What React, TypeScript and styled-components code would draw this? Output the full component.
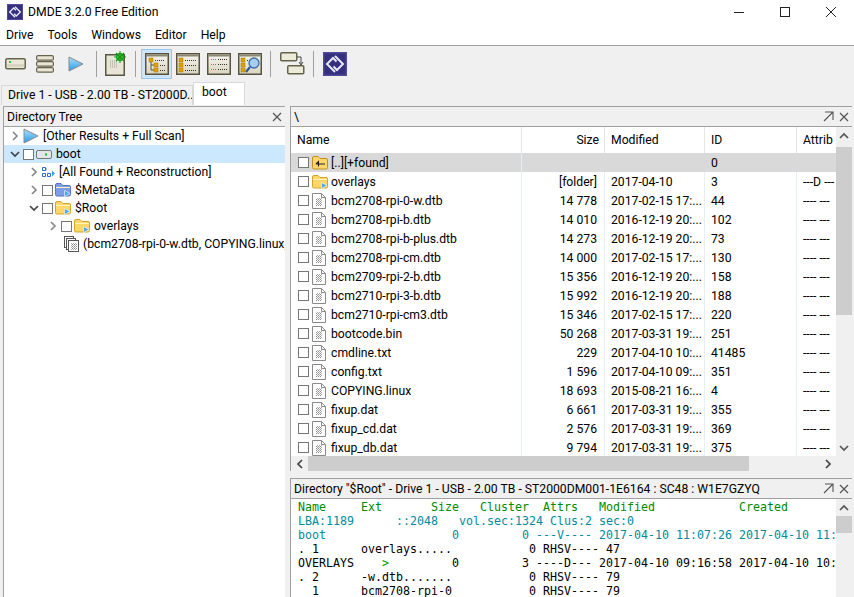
import React from "react";
import styled, { createGlobalStyle } from "styled-components";

const Global = createGlobalStyle`
  html, body { margin: 0; padding: 0; background: #f0f0f0; overflow: hidden; }
  #root { width: 854px; height: 597px; overflow: hidden; }
  * { box-sizing: border-box; }
`;

const Page = styled.div`
  width: 854px; height: 597px; display: flex; flex-direction: column;
  font-family: Roboto, "Liberation Sans", sans-serif; font-size: 12px; color: #000; background: #f0f0f0;
  overflow: hidden;
`;
const TitleBar = styled.div`
  height: 23px; flex: none; background: #fff; display: flex; align-items: center; padding-left: 7px;
`;
const TitleText = styled.div`margin-left: 5px; font-size: 12.2px; flex: 1; padding-top: 0;`;
const WinBtn = styled.div`
  width: 46px; height: 23px; display: flex; align-items: center; justify-content: center;
`;
const MenuBar = styled.div`
  height: 23px; flex: none; background: #fff; display: flex; align-items: center; padding: 2px 0 0 6px; gap: 14px;
  border-bottom: 1px solid #a0a0a0;
`;
const Menu = styled.span`font-size: 12.2px;`;
const Toolbar = styled.div`
  height: 35px; flex: none; display: flex; align-items: center; padding-left: 1px;
`;
const ToolBtn = styled.div<{ $w: number; $on?: boolean }>`
  width: ${p => p.$w}px; height: 30px; flex: none; display: flex; align-items: center; justify-content: center;
  background: ${p => (p.$on ? "#cce4f7" : "transparent")};
  border: 1px solid ${p => (p.$on ? "#99c9ef" : "transparent")};
`;
const Sep = styled.div`width: 1px; height: 26px; background: #a0a0a0; flex: none; margin: 0 5px;`;
const TabsRow = styled.div`
  height: 24px; flex: none; display: flex; align-items: flex-end; padding-left: 1px;
`;
const Tab = styled.div<{ $on?: boolean }>`
  height: ${p => (p.$on ? 23 : 20)}px; width: ${p => (p.$on ? 52 : 192)}px;
  background: ${p => (p.$on ? "#fff" : "#f0f0f0")};
  border: 1px solid #d9d9d9; border-bottom: none;
  padding: ${p => (p.$on ? "2px 0 0 8px" : "2px 0 0 6px")};
  white-space: nowrap; overflow: hidden; font-size: 12.2px;
`;
const Workspace = styled.div`
  flex: 1; min-height: 0; display: flex; padding: 1px 2px 0 3px; gap: 5px;
`;
const Panel = styled.div<{ $w?: number }>`
  ${p => (p.$w ? `width: ${p.$w}px; flex: none;` : "flex: 1; min-width: 0;")}
  border-top: 1px solid #a0a0a0; border-left: 1px solid #a0a0a0;
  display: flex; flex-direction: column; background: #fff; overflow: hidden; min-height: 0;
`;
const RightCol = styled.div`flex: 1; min-width: 0; display: flex; flex-direction: column; gap: 7px;`;
const PanelHead = styled.div`
  height: 20px; flex: none; background: #f0f0f0; border-bottom: 1px solid #a0a0a0;
  display: flex; align-items: center; padding: 0 3px 0 3px; font-size: 12.2px; white-space: nowrap;
`;
const PanelTitle = styled.div`flex: 1; min-width: 0; overflow: hidden;`;
const HeadIcons = styled.div`display: flex; gap: 5px; align-items: center; flex: none;`;
const Tree = styled.div`padding-top: 0; flex: 1; overflow: hidden;`;
const TreeRow = styled.div<{ $on?: boolean; $indent: number }>`
  height: 18px; display: flex; align-items: center; padding-left: ${p => p.$indent}px;
  background: ${p => (p.$on ? "#cce8ff" : "transparent")}; white-space: nowrap; overflow: hidden;
`;
const Check = styled.div`
  width: 11px; height: 11px; border: 1px solid #767676; background: #fff; flex: none; margin-right: 2px;
`;
const TreeLabel = styled.span`margin-left: 4px; font-size: 12.2px;`;
const TableWrap = styled.div`flex: 1; min-height: 0; display: flex; flex-direction: column;`;
const TableMain = styled.div`flex: 1; min-height: 0; display: flex;`;
const Table = styled.div`flex: 1; min-width: 0; overflow: hidden;`;
const gridCols = "231px 83px 100px 92px 1fr";
const HeaderRow = styled.div`
  display: grid; grid-template-columns: ${gridCols}; height: 26px; align-items: stretch; background: #fff;
`;
const HeadCell = styled.div<{ $right?: boolean; $last?: boolean }>`
  display: flex; align-items: center; justify-content: ${p => (p.$right ? "flex-end" : "flex-start")};
  padding: ${p => (p.$right ? "0 5px 0 0" : "0 0 0 6px")}; overflow: hidden; white-space: nowrap;
  border-right: ${p => (p.$last ? "none" : "1px solid #e5e5e5")}; font-size: 12.2px;
`;
const DataRow = styled.div<{ $on?: boolean }>`
  display: grid; grid-template-columns: ${gridCols}; height: 19px; background: ${p => (p.$on ? "#d9d9d9" : "#fff")};
`;
const Cell = styled.div<{ $right?: boolean; $last?: boolean; $on?: boolean }>`
  display: flex; align-items: center; justify-content: ${p => (p.$right ? "flex-end" : "flex-start")};
  padding: ${p => (p.$right ? "0 7px 0 0" : "0 0 0 6px")}; overflow: hidden; white-space: nowrap; font-size: 12.2px;
  border-right: ${p => (p.$last || p.$on ? "none" : "1px solid #e6eef7")};
`;
const NameCell = styled(Cell)`padding-left: 7px;`;
const RowIcon = styled.span`display: inline-flex; width: 18px; flex: none; margin-left: 1px; margin-right: 1px;`;
const VScroll = styled.div`
  width: 16px; flex: none; background: #f0f0f0; display: flex; flex-direction: column; align-items: stretch;
`;
const ScrollArrow = styled.div`height: 17px; flex: none; display: flex; align-items: center; justify-content: center;`;
const VThumb = styled.div<{ $h: number; $t: number }>`
  height: ${p => p.$h}px; margin-top: ${p => p.$t}px; background: #cdcdcd; flex: none;
`;
const Fill = styled.div`flex: 1;`;
const HScroll = styled.div`height: 15px; flex: none; display: flex; background: #f0f0f0; align-items: stretch;`;
const HArrow = styled.div`width: 17px; flex: none; display: flex; align-items: center; justify-content: center;`;
const HThumb = styled.div`width: 441px; background: #cdcdcd; flex: none;`;
const HEnd = styled.div`width: 16px; flex: none; background: #f0f0f0;`;
const ConsoleWrap = styled.div`height: 98px; flex: none; display: flex; overflow: hidden;`;
const Console = styled.div`
  flex: 1; min-width: 0; overflow: hidden; padding: 1px 0 0 7px;
  font-family: "DejaVu Sans Mono", "Liberation Mono", monospace; font-size: 11.63px; line-height: 14px;
`;
const Line = styled.div<{ $c?: string }>`white-space: pre; color: ${p => p.$c || "#000"};`;
const Gt = styled.span`color: #00a000;`;

const Chev = ({ d, c = "#888" }: { d: "r" | "d" | "u" | "l"; c?: string }) => {
  const p = { r: "M3 1l4 4-4 4", l: "M7 1L3 5l4 4", d: "M1 3l4 4 4-4", u: "M1 7l4-4 4 4" }[d];
  return <svg width="10" height="10" viewBox="0 0 10 10" style={{ flex: "none" }}><path d={p} fill="none" stroke={c} strokeWidth="1.7" /></svg>;
};
const Slot = styled.span`width: 17px; display: inline-flex; justify-content: center; flex: none;`;

const Logo = ({ s = 16 }: { s?: number }) => (
  <svg width={s} height={s} viewBox="0 0 24 24">
    <rect width="24" height="24" fill="#2f2a7c" />
    <rect x=".8" y=".8" width="22.4" height="22.4" fill="#34307f" stroke="#5d5aa0" />
    <path d="M12 4l8 8-6 6-3.5-3.5M12 20l-8-8 6-6 3.5 3.5" fill="none" stroke="#e8e8f4" strokeWidth="2" />
  </svg>
);
const Bezel = ({ children, w = 24, h = 22 }: { children?: React.ReactNode; w?: number; h?: number }) => (
  <svg width={w} height={h} viewBox={`0 0 ${w} ${h}`}>
    <defs><linearGradient id="bz" x1="0" y1="0" x2="0" y2="1"><stop offset="0" stopColor="#f7f6ee" /><stop offset="1" stopColor="#d8d4c0" /></linearGradient></defs>
    <rect x=".75" y=".75" width={w - 1.5} height={h - 1.5} fill="url(#bz)" stroke="#57533f" strokeWidth="1.5" />
    <rect x="1.5" y="1.5" width={w - 3} height="2" fill="#8a8774" />
    {children}
  </svg>
);
const Sq = ({ x, y, c = "#e0a000" }: { x: number; y: number; c?: string }) => <rect x={x} y={y} width="4" height="4" fill={c} stroke="#a87800" strokeWidth=".5" />;
const Dots = ({ x, y, n = 5, c = "#333" }: { x: number; y: number; n?: number; c?: string }) => (
  <path d={`M${x} ${y + .5}h${n * 2}`} stroke={c} strokeDasharray="1 1" fill="none" />
);
const DriveIcon = () => (
  <svg width="21" height="12" viewBox="0 0 21 12">
    <rect x=".75" y=".75" width="19.5" height="10" rx="1.5" fill="#ebe8d8" stroke="#66634c" strokeWidth="1.5" />
    <rect x="4" y="3" width="2" height="2" fill="#20d040" />
    <rect x="2" y="6" width="17" height="3" fill="#d8d4c0" />
  </svg>
);
const StackIcon = () => (
  <svg width="18" height="18" viewBox="0 0 18 18">
    {[1, 7, 13].map(y => <rect key={y} x=".6" y={y - .4} width="16.8" height="4.6" rx="1.5" fill="#e8e5d4" stroke="#66634c" strokeWidth="1.2" />)}
  </svg>
);
const PlayIcon = ({ s = 16 }: { s?: number }) => (
  <svg width={s} height={s} viewBox="0 0 16 16">
    <defs><linearGradient id="pl" x1="0" y1="0" x2="0" y2="1"><stop offset="0" stopColor="#a8e0fb" /><stop offset="1" stopColor="#2b9be8" /></linearGradient></defs>
    <path d="M1 1l14 7-14 7z" fill="url(#pl)" stroke="#8b8b8b" />
  </svg>
);
const NewIcon = () => (
  <svg width="22" height="25" viewBox="0 0 22 25">
    <rect x=".75" y="3.75" width="18.5" height="20.5" fill="#e8e5d6" stroke="#5a5744" strokeWidth="1.5" />
    <path d="M5 10h8M5 12h8M5 14h8M5 16h8" stroke="#9a9a90" strokeDasharray="1 1" />
    <circle cx="15" cy="6" r="3.2" fill="#f4f8e8" stroke="#0a9c0a" strokeWidth="1.4" />
    <path d="M15 0v12M9 6h12M11 2l8 8M19 2l-8 8" stroke="#0a9c0a" strokeWidth="1.1" />
  </svg>
);
const TreeTool = () => (
  <Bezel><Sq x={4} y={5} /><Dots x={10} y={7} n={5} /><Sq x={9} y={10} /><Dots x={15} y={12} n={3} /><Sq x={9} y={15} /><Dots x={15} y={17} n={3} /><path d="M6 9v8h3M6 12h3" stroke="#555" fill="none" /></Bezel>
);
const ListTool = () => (
  <Bezel><Sq x={3} y={5} /><Dots x={9} y={7} n={6} /><Sq x={3} y={10} /><Dots x={9} y={12} n={6} /><Sq x={3} y={15} /><Dots x={9} y={17} n={6} /></Bezel>
);
const TealTool = () => (
  <Bezel>{[6, 11, 16].map(y => <g key={y}><Dots x={4} y={y} n={3} c="#10b0b0" /><Dots x={11} y={y} n={5} /></g>)}</Bezel>
);
const FindTool = () => (
  <Bezel><Sq x={3} y={5} /><Dots x={9} y={7} n={2} /><Sq x={3} y={10} /><Sq x={3} y={15} /><circle cx="16" cy="10" r="5" fill="#a7cdf0" stroke="#3a6ea8" strokeWidth="1.3" /><path d="M12 14l-4 5" stroke="#2c5c98" strokeWidth="2.2" /></Bezel>
);
const WinTool = () => (
  <svg width="25" height="23" viewBox="0 0 25 23">
    <rect x=".75" y=".75" width="16" height="8" rx="1" fill="#ecead9" stroke="#66634c" strokeWidth="1.5" />
    <rect x="7.75" y="13.75" width="16" height="8" rx="1" fill="#ecead9" stroke="#66634c" strokeWidth="1.5" />
    <path d="M17 5h4v7M19 10l2 3 2-3" stroke="#444" fill="none" />
  </svg>
);
const Folder = ({ c = "#ffd768", b = "#d4a32c", play = true, w = 16 }: { c?: string; b?: string; play?: boolean; w?: number }) => (
  <svg width={w} height="14" viewBox="0 0 16 14" style={{ flex: "none" }}>
    <path d="M.5 3V2q0-1.5 1.5-1.5h4L8 2.500h6q1.500 0 1.500 1.500v7.500q0 1.500-1.500 1.500H2q-1.500 0-1.500-1.500z" fill={c} stroke={b} />
    <path d="M1 4.500h14" stroke="#fff3c0" />
    {play && <path d="M9.500 7.500l5.500 3-5.500 3z" fill="#4aa8ea" stroke="#fff" strokeWidth=".6" />}
  </svg>
);
const UpFolder = () => (
  <svg width="16" height="14" viewBox="0 0 16 14"><path d="M.5 3V2q0-1.500 1.500-1.500h4L8 2.500h6q1.500 0 1.500 1.500v7.500q0 1.500-1.500 1.500H2q-1.500 0-1.500-1.500z" fill="#ffd768" stroke="#c0921c" /><path d="M4 8h9M4 8l2.500-2.500v5" stroke="#222" fill="none" strokeWidth="1.1" /></svg>
);
const FileIcon = () => (
  <svg width="14" height="16" viewBox="0 0 14 16" style={{ flex: "none" }}>
    <defs><pattern id="dots" width="2" height="2" patternUnits="userSpaceOnUse"><rect width="1" height="1" fill="#8c8c8c" /><rect x="1" y="1" width="1" height="1" fill="#aaa" /></pattern></defs>
    <path d="M.5.5h9l4 4v11H.5z" fill="#fff" stroke="#8a8a8a" />
    <path d="M9.500.5v4h4" fill="none" stroke="#8a8a8a" />
    <rect x="4" y="5" width="6" height="8" fill="url(#dots)" />
  </svg>
);
const MultiFile = () => (
  <svg width="15" height="16" viewBox="0 0 15 16" style={{ flex: "none" }}>
    <rect x=".5" y=".5" width="9" height="11" fill="#fff" stroke="#555" />
    <rect x="2.500" y="2.500" width="9" height="11" fill="#fff" stroke="#555" />
    <rect x="4.500" y="4.500" width="10" height="11" fill="#fff" stroke="#555" />
    <rect x="7" y="7" width="6" height="7" fill="url(#dots)" />
  </svg>
);
const SmallDrive = () => (
  <svg width="16" height="9" viewBox="0 0 16 9"><rect x=".5" y=".5" width="15" height="8" rx="1.500" fill="#e6e6e6" stroke="#777" /><rect x="9" y="3.500" width="2" height="2" fill="#10c030" /></svg>
);
const FoundIcon = () => (
  <svg width="13" height="11" viewBox="0 0 13 11">
    <path d="M.5.5h3v3h-3zM.5 6.500h3v3h-3zM5.500 6.500h3v3h-3z" fill="#fff" stroke="#2a6fd0" />
    <path d="M3 2h2" stroke="#2a6fd0" /><path d="M10 3.500l3 3-3 3z" fill="#3aa0e8" />
  </svg>
);
const Xx = () => <svg width="10" height="10" viewBox="0 0 10 10"><path d="M1 1l8 8M9 1l-8 8" stroke="#555" strokeWidth="1.2" /></svg>;
const Pin = () => <svg width="11" height="11" viewBox="0 0 11 11"><path d="M2 1h8v8M10 1L1 10" fill="none" stroke="#555" strokeWidth="1.1" /></svg>;

const files: [string, string, string, string, string][] = [
  ["bcm2708-rpi-0-w.dtb", "14 778", "2017-02-15 17:...", "44", "---- ---"],
  ["bcm2708-rpi-b.dtb", "14 010", "2016-12-19 20:...", "102", "---- ---"],
  ["bcm2708-rpi-b-plus.dtb", "14 273", "2016-12-19 20:...", "73", "---- ---"],
  ["bcm2708-rpi-cm.dtb", "14 000", "2017-02-15 17:...", "130", "---- ---"],
  ["bcm2709-rpi-2-b.dtb", "15 356", "2016-12-19 20:...", "158", "---- ---"],
  ["bcm2710-rpi-3-b.dtb", "15 992", "2016-12-19 20:...", "188", "---- ---"],
  ["bcm2710-rpi-cm3.dtb", "15 346", "2017-02-15 17:...", "220", "---- ---"],
  ["bootcode.bin", "50 268", "2017-03-31 19:...", "251", "---- ---"],
  ["cmdline.txt", "229", "2017-04-10 10:...", "41485", "---- ---"],
  ["config.txt", "1 596", "2017-04-10 09:...", "351", "---- ---"],
  ["COPYING.linux", "18 693", "2015-08-21 16:...", "4", "---- ---"],
  ["fixup.dat", "6 661", "2017-03-31 19:...", "355", "---- ---"],
  ["fixup_cd.dat", "2 576", "2017-03-31 19:...", "369", "---- ---"],
  ["fixup_db.dat", "9 794", "2017-03-31 19:...", "375", "---- ---"],
];

export default function App() {
  return (
    <Page>
      <Global />
      <TitleBar>
        <Logo />
        <TitleText>DMDE 3.2.0 Free Edition</TitleText>
        <WinBtn><svg width="10" height="10"><path d="M0 5.500h10" stroke="#222" /></svg></WinBtn>
        <WinBtn><svg width="10" height="10"><rect x=".5" y=".5" width="9" height="9" fill="none" stroke="#222" /></svg></WinBtn>
        <WinBtn><svg width="10" height="10"><path d="M0 0l10 10M10 0L0 10" stroke="#222" /></svg></WinBtn>
      </TitleBar>
      <MenuBar>
        <Menu>Drive</Menu><Menu>Tools</Menu><Menu>Windows</Menu><Menu>Editor</Menu><Menu>Help</Menu>
      </MenuBar>
      <Toolbar>
        <ToolBtn $w={28}><DriveIcon /></ToolBtn>
        <ToolBtn $w={32}><StackIcon /></ToolBtn>
        <ToolBtn $w={30}><PlayIcon /></ToolBtn>
        <Sep />
        <ToolBtn $w={28}><NewIcon /></ToolBtn>
        <Sep />
        <ToolBtn $w={31} $on><TreeTool /></ToolBtn>
        <ToolBtn $w={31}><ListTool /></ToolBtn>
        <ToolBtn $w={31}><TealTool /></ToolBtn>
        <ToolBtn $w={31}><FindTool /></ToolBtn>
        <Sep />
        <ToolBtn $w={32}><WinTool /></ToolBtn>
        <Sep />
        <ToolBtn $w={32}><Logo s={24} /></ToolBtn>
      </Toolbar>
      <TabsRow>
        <Tab>Drive 1 - USB - 2.00 TB - ST2000D...</Tab>
        <Tab $on>boot</Tab>
      </TabsRow>
      <Workspace>
        <Panel $w={282}>
          <PanelHead>
            <PanelTitle>Directory Tree</PanelTitle>
            <HeadIcons><Xx /></HeadIcons>
          </PanelHead>
          <Tree>
            <TreeRow $indent={2}><Slot><Chev d="r" /></Slot><PlayIcon /><TreeLabel>[Other Results + Full Scan]</TreeLabel></TreeRow>
            <TreeRow $indent={2} $on><Slot><Chev d="d" c="#444" /></Slot><Check /><SmallDrive /><TreeLabel>boot</TreeLabel></TreeRow>
            <TreeRow $indent={21}><Slot><Chev d="r" /></Slot><FoundIcon /><TreeLabel>[All Found + Reconstruction]</TreeLabel></TreeRow>
            <TreeRow $indent={21}><Slot><Chev d="r" /></Slot><Check /><Folder c="#7f9ce8" b="#5a74c0" /><TreeLabel>$MetaData</TreeLabel></TreeRow>
            <TreeRow $indent={21}><Slot><Chev d="d" c="#444" /></Slot><Check /><Folder /><TreeLabel>$Root</TreeLabel></TreeRow>
            <TreeRow $indent={40}><Slot><Chev d="r" /></Slot><Check /><Folder /><TreeLabel>overlays</TreeLabel></TreeRow>
            <TreeRow $indent={60}><MultiFile /><TreeLabel>(bcm2708-rpi-0-w.dtb, COPYING.linux, LICENCE</TreeLabel></TreeRow>
          </Tree>
        </Panel>
        <RightCol>
          <Panel>
            <PanelHead>
              <PanelTitle>\</PanelTitle>
              <HeadIcons><Pin /><Xx /></HeadIcons>
            </PanelHead>
            <TableWrap>
              <TableMain>
                <Table>
                  <HeaderRow>
                    <HeadCell>Name</HeadCell>
                    <HeadCell $right>Size</HeadCell>
                    <HeadCell>Modified</HeadCell>
                    <HeadCell>ID</HeadCell>
                    <HeadCell $last>Attrib</HeadCell>
                  </HeaderRow>
                  <DataRow $on>
                    <NameCell><Check /><RowIcon><UpFolder /></RowIcon>[..][+found]</NameCell>
                    <Cell $on $right></Cell><Cell $on></Cell><Cell $on>0</Cell><Cell $last></Cell>
                  </DataRow>
                  <DataRow>
                    <NameCell><Check /><RowIcon><Folder /></RowIcon>overlays</NameCell>
                    <Cell $right>[folder]</Cell><Cell>2017-04-10</Cell><Cell>3</Cell><Cell $last>---D ---</Cell>
                  </DataRow>
                  {files.map(f => (
                    <DataRow key={f[0]}>
                      <NameCell><Check /><RowIcon><FileIcon /></RowIcon>{f[0]}</NameCell>
                      <Cell $right>{f[1]}</Cell><Cell>{f[2]}</Cell><Cell>{f[3]}</Cell><Cell $last>{f[4]}</Cell>
                    </DataRow>
                  ))}
                </Table>
                <VScroll>
                  <ScrollArrow><Chev d="u" c="#555" /></ScrollArrow>
                  <VThumb $t={3} $h={168} />
                  <Fill />
                  <ScrollArrow><Chev d="d" c="#555" /></ScrollArrow>
                </VScroll>
              </TableMain>
              <HScroll>
                <HArrow><Chev d="l" c="#444" /></HArrow>
                <HThumb />
                <Fill />
                <HArrow><Chev d="r" c="#444" /></HArrow>
                <HEnd />
              </HScroll>
            </TableWrap>
          </Panel>
          <Panel style={{ flex: "none" }}>
            <PanelHead>
              <PanelTitle>Directory "$Root" - Drive 1 - USB - 2.00 TB - ST2000DM001-1E6164 : SC48 : W1E7GZYQ</PanelTitle>
              <HeadIcons><Pin /><Xx /></HeadIcons>
            </PanelHead>
            <ConsoleWrap>
              <Console>
                <Line $c="#008a00">{"Name     Ext       Size   Cluster  Attrs   Modified            Created"}</Line>
                <Line $c="#008b9b">{"LBA:1189      ::2048   vol.sec:1324 Clus:2 sec:0"}</Line>
                <Line $c="#008b9b">{"boot                  0         0 ---V---- 2017-04-10 11:07:26 2017-04-10 11:12:00"}</Line>
                <Line>{". 1      overlays.....           0 RHSV---- 47"}</Line>
                <Line>{"OVERLAYS    "}<Gt>&gt;</Gt>{"         0         3 ----D--- 2017-04-10 09:16:58 2017-04-10 10:12:00"}</Line>
                <Line>{". 2      -w.dtb.......           0 RHSV---- 79"}</Line>
                <Line>{"  1      bcm2708-rpi-0           0 RHSV---- 79"}</Line>
              </Console>
              <VScroll>
                <ScrollArrow><Chev d="u" c="#555" /></ScrollArrow>
                <VThumb $t={0} $h={17} />
                <Fill />
              </VScroll>
            </ConsoleWrap>
          </Panel>
        </RightCol>
      </Workspace>
    </Page>
  );
}
